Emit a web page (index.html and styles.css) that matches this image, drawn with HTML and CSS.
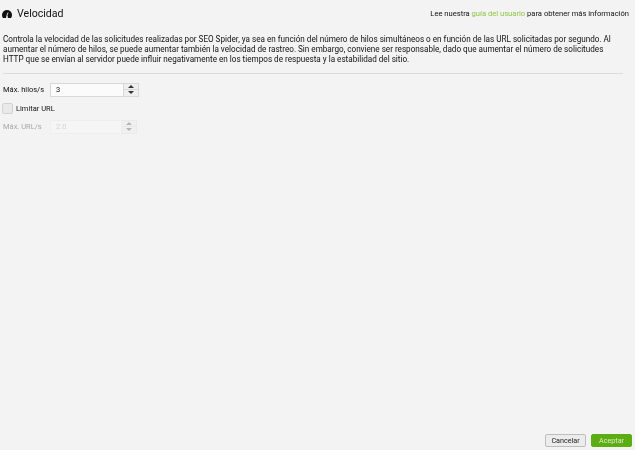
FILE: index.html
```html
<!DOCTYPE html>
<html lang="en">
<head>
    <meta charset="UTF-8">
    <title>Velocidad</title>
    <link rel="stylesheet" href="styles.css">
</head>
<body>
    <div class="page">
        <!-- Header -->
        <div class="header">
            <div class="title">
                <svg class="title-icon" width="10" height="8" viewBox="0 0 10 8">
                    <path d="M5 0A5 5 0 0 0 0 5C0 6 .3 7 .9 8H9.1C9.7 7 10 6 10 5A5 5 0 0 0 5 0Z" fill="#111"/>
                    <path d="M6 2.6L5 5.4" stroke="#f3f3f3" stroke-width=".9"/>
                    <path d="M4.1 8L4.4 5.6H5.6L5.9 8Z" fill="#f3f3f3"/>
                </svg>
                <h1>Velocidad</h1>
            </div>
            <p class="guide">Lee nuestra <span class="guide-link">guía del usuario</span> para obtener más información</p>
        </div>

        <p class="description">Controla la velocidad de las solicitudes realizadas por SEO Spider, ya sea en función del número de hilos simultáneos o en función de las URL solicitadas por segundo. Al aumentar el número de hilos, se puede aumentar también la velocidad de rastreo. Sin embargo, conviene ser responsable, dado que aumentar el número de solicitudes HTTP que se envían al servidor puede influir negativamente en los tiempos de respuesta y la estabilidad del sitio.</p>

        <hr class="divider">

        <!-- Settings -->
        <div class="settings">
            <div class="row">
                <label class="row-label">Máx. hilos/s</label>
                <div class="spinner">
                    <span class="spinner-value">3</span>
                    <span class="spinner-arrows"><span class="step"><i class="arrow-up"></i></span><span class="step"><i class="arrow-down"></i></span></span>
                </div>
            </div>
            <div class="row check-row">
                <span class="checkbox"></span>
                <label class="check-label">Limitar URL</label>
            </div>
            <div class="row disabled">
                <label class="row-label">Máx. URL/s</label>
                <div class="spinner">
                    <span class="spinner-value">2.0</span>
                    <span class="spinner-arrows"><span class="step"><i class="arrow-up"></i></span><span class="step"><i class="arrow-down"></i></span></span>
                </div>
            </div>
        </div>

        <!-- Footer buttons -->
        <div class="footer">
            <button class="cancel-button">Cancelar</button>
            <button class="ok-button">Aceptar</button>
        </div>
    </div>
</body>
</html>
```

FILE: styles.css
```css
* {
    margin: 0;
    padding: 0;
    box-sizing: border-box;
}

html, body {
    height: 100%;
}

body {
    font-family: Roboto, "Liberation Sans", sans-serif;
    background-color: #f3f3f3;
    color: #111111;
    overflow: hidden;
}

/* the reference is a soft, slightly blurred capture */
.page {
    height: 450px;
    display: flex;
    flex-direction: column;
    padding: 0 3px 3px 3px;
    filter: blur(0.3px);
}

.header {
    display: flex;
    justify-content: space-between;
    align-items: center;
    height: 27px;
}

.title {
    display: flex;
    align-items: center;
    gap: 5px;
    margin-left: -1px;
}

.title-icon {
    margin-top: 1px;
}

h1 {
    font-size: 10.6px;
    font-weight: 400;
}

.guide {
    font-size: 7.6px;
    padding-right: 3px;
}

.guide-link {
    color: #8cc63f;
}

.description {
    font-size: 8.13px;
    line-height: 10px;
    margin-top: 7px;
    width: 614px;
}

.divider {
    border: none;
    border-top: 1px solid #dcdcdc;
    margin: 9px 9px 0 0;
}

.settings {
    display: flex;
    flex-direction: column;
    margin-top: 8px;
}

.row {
    display: flex;
    align-items: center;
    height: 15px;
    font-size: 7.5px;
}

.row-label {
    width: 47px;
}

.spinner {
    width: 89px;
    height: 14px;
    display: flex;
}

.spinner-value {
    flex: 1;
    background-color: #fbfbfb;
    border: 1px solid #d8d8d8;
    padding-left: 5px;
    line-height: 12px;
}

.spinner-arrows {
    width: 15px;
    display: flex;
    flex-direction: column;
    background-color: #efefef;
    border: 1px solid #d8d8d8;
    border-left: none;
}

.step {
    flex: 1;
    display: flex;
    align-items: center;
    justify-content: center;
}

.step + .step {
    border-top: 1px solid #d9d9d9;
}

.arrow-up, .arrow-down {
    width: 0;
    height: 0;
    border-left: 3px solid transparent;
    border-right: 3px solid transparent;
}

.arrow-up {
    border-bottom: 3px solid #333;
}

.arrow-down {
    border-top: 3px solid #333;
}

.check-row {
    margin-top: 4px;
    height: 14px;
}

.checkbox {
    width: 11px;
    height: 11px;
    background-color: #e9e9e9;
    border: 1px solid #d2d2d2;
    border-radius: 2px;
    margin: 0 3px 0 -1px;
}

.check-label {
    font-size: 7.5px;
}

.disabled {
    margin-top: 4px;
    color: #a8a8a8;
}

.disabled .spinner-value {
    background-color: #f5f5f5;
    border-color: #eeeeee;
    color: #d4d4d4;
}

.disabled .spinner {
    width: 87px;
}

.disabled .spinner-arrows {
    background-color: #f0f0f0;
    border-color: #eaeaea;
}

.disabled .step + .step {
    border-top-color: #e8e8e8;
}

.disabled .arrow-up {
    border-bottom-color: #b5b5b5;
}

.disabled .arrow-down {
    border-top-color: #b5b5b5;
}

.footer {
    margin-top: auto;
    display: flex;
    justify-content: flex-end;
    gap: 5px;
}

button {
    width: 41px;
    height: 13px;
    font-family: inherit;
    font-size: 7.2px;
    border-radius: 2px;
}

.cancel-button {
    background-color: #ececec;
    border: 1px solid #bdbdbd;
    color: #222;
}

.ok-button {
    background-color: #5cac14;
    border: 1px solid #5cac14;
    color: #d8efc0;
}
```
